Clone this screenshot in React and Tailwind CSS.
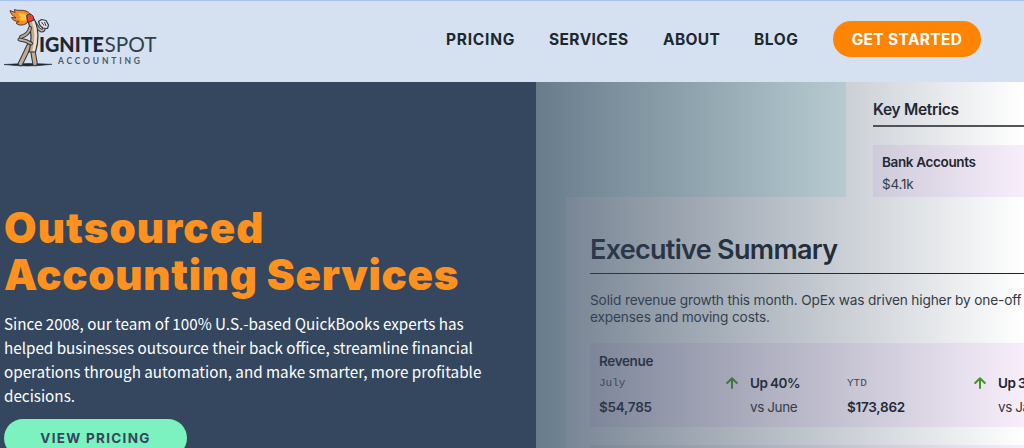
import React from 'react';

const NAV_LINKS = [
  { label: 'PRICING', width: 'w-[103px]', spacing: 'tracking-[0.75px]' },
  { label: 'SERVICES', width: 'w-[114px]', spacing: 'tracking-[0.4px]' },
  { label: 'ABOUT', width: 'w-[91px]', spacing: 'tracking-[0.35px]' },
  { label: 'BLOG', width: 'w-[78px]', spacing: 'tracking-[0.6px]' },
];

const Logo = () => (
  <svg width="160" height="70" viewBox="0 0 160 70" className="block shrink-0" aria-label="Ignite Spot Accounting">
    <path d="M4 63.500Q28 61.500 52 63.300Q28 66.500 4 63.500Z" fill="#1d2831" stroke="#1d2831" strokeWidth="0.600" />
    {/* flame */}
    <path d="M27 22C23 25 18 24.500 16 22L19 20.500C15 20.500 12.500 19 11.500 16.500L16 17C12.500 15 10.500 12 10 9.500L15 11.500L14.500 8.500C18 10.500 23 8 27 10.500C29 11.500 30 12.500 31 14Z" fill="#f58c20" stroke="#4e3f3c" strokeWidth="1" strokeLinejoin="round" />
    <path d="M26 19C23 21 20 19 19 17L21.500 17C19 15 19 13 18 12C21 12.500 24 12 27 14" fill="#ffc04a" />
    {/* right arm behind the body */}
    <path d="M33 20C37 24 37 28 41 29.500C44 30 45 27 43 24" fill="none" stroke="#303942" strokeWidth="3.800" strokeLinecap="round" />
    <path d="M33 20C37 24 37 28 41 29.500C44 30 45 27 43 24" fill="none" stroke="#cdbba6" strokeWidth="1.700" strokeLinecap="round" />
    {/* legs */}
    <path d="M29 45C26 51 24 56 20.500 62.500M33 48C33 54 34.500 58 35 62.500" fill="none" stroke="#303942" strokeWidth="5.500" strokeLinecap="round" />
    <path d="M29 45C26 51 24 56 20.500 62.500M33 48C33 54 34.500 58 35 62.500" fill="none" stroke="#c5aa90" strokeWidth="3.400" strokeLinecap="round" />
    {/* match stick body */}
    <path d="M28 20L34 18C39 27 39 40 35.500 51L29 51C32 40 31.500 29 28 20Z" fill="#c5a98c" stroke="#303942" strokeWidth="1.200" strokeLinejoin="round" />
    <path d="M33 20C36.500 29 36.500 40 33.500 50" fill="none" stroke="#eee2d2" strokeWidth="2.600" />
    {/* left arm bent to the hip */}
    <path d="M30 27C29 33 24 35 21 36M19.500 38.500C24 39 28 40.500 31 42.500" fill="none" stroke="#303942" strokeWidth="4" strokeLinecap="round" />
    <path d="M30 27C29 33 24 35 21 36M19.500 38.500C24 39 28 40.500 31 42.500" fill="none" stroke="#c5aa90" strokeWidth="2" strokeLinecap="round" />
    <path d="M26.500 14.500Q30 11.500 33 15L34 19L28 21.500Z" fill="#ee4034" stroke="#303942" strokeWidth="1" strokeLinejoin="round" />
    {/* glove */}
    <path d="M38.500 20.500L41.500 18.500L46 19.500L48.500 24L47.500 27.500L43 27L40 24.500Z" fill="#e3e8ed" stroke="#303942" strokeWidth="1.200" strokeLinejoin="round" />
    <path d="M41.500 21L44 24.500M44.500 21L46 25" stroke="#303942" strokeWidth="1" />
    <text x="39" y="51" textLength="65" lengthAdjust="spacingAndGlyphs" fontFamily="Lato, sans-serif" fontWeight="900" fontSize="20.500" fill="#1d2831">IGNITE</text>
    <text x="104.500" y="51" textLength="52" lengthAdjust="spacingAndGlyphs" fontFamily="Lato, sans-serif" fontWeight="400" fontSize="20.500" fill="#33404b">SPOT</text>
    <text x="58" y="63" textLength="82" fontFamily="Lato, sans-serif" fontWeight="700" fontSize="8.500" fill="#4c5a67">ACCOUNTING</text>
  </svg>
);

const UpArrow = () => (
  <svg width="12" height="12" viewBox="0 0 12 12" className="block" fill="none" stroke="#469b24" strokeWidth="2" strokeLinecap="round" strokeLinejoin="round">
    <path d="M6 11V1.500M1.200 6L6 1.200L10.800 6" />
  </svg>
);

const Header = () => (
  <header className="flex h-[82px] w-full items-start border-t border-[#a9c3f5] bg-[#d5e1f1]">
    <Logo />
    <nav className="ml-[286px] mt-[20px] flex h-9 items-center font-['Inter',sans-serif] text-[15.5px] font-bold text-[#1d2831]">
      {NAV_LINKS.map((link) => (
        <a key={link.label} className={`${link.width} ${link.spacing} whitespace-nowrap pt-px`}>{link.label}</a>
      ))}
      <a className="ml-px flex h-[36px] w-[148px] items-center justify-center whitespace-nowrap rounded-full bg-[#ff8403] pt-px tracking-[0.35px] text-white">
        GET STARTED
      </a>
    </nav>
  </header>
);

const Intro = () => (
  <div className="w-[536px] shrink-0 bg-[#34475e] pl-1 pt-[122px]">
    <h1 className="whitespace-nowrap font-['Inter',sans-serif] text-[42px] font-black leading-[47px] text-[#ff921e]">
      <span className="block tracking-[1.1px]">Outsourced</span>
      <span className="block tracking-[0.7px]">Accounting Services</span>
    </h1>
    <p className="mt-[13px] whitespace-nowrap font-['Noto_Sans_CJK_SC',sans-serif] text-[15.23px] leading-6 text-white">
      Since 2008, our team of 100% U.S.-based QuickBooks experts has<br />
      helped businesses outsource their back office, streamline financial<br />
      operations through automation, and make smarter, more profitable<br />
      decisions.
    </p>
    <a className="mt-[12px] flex h-[38px] w-[183px] items-center justify-center rounded-full bg-[#7bf2c0] font-['Inter',sans-serif] text-[13.5px] font-bold tracking-[1.3px] text-[#34475e]">
      VIEW PRICING
    </a>
  </div>
);

const KeyMetrics = () => (
  <div className="ml-[310px] h-[115px] bg-white pl-[27px] pt-[17px]">
    <h3 className="border-b-2 border-[#555] pb-[4px] text-[15.5px] font-semibold leading-[22px] tracking-[-0.3px]">Key Metrics</h3>
    <div className="mt-[18px] h-[53px] bg-[#f8eefb] pl-[9px] pt-[7px]">
      <div className="text-[13.5px] font-semibold leading-[20px] tracking-[-0.35px]">Bank Accounts</div>
      <div className="mt-[2px] text-[13.5px] leading-[20px] tracking-[-0.2px] text-[#333a42]">$4.1k</div>
    </div>
  </div>
);

const Report = () => (
  <div className="ml-[30px] h-[251px] bg-white pl-[24px] pt-[35px]">
    <h2 className="whitespace-nowrap border-b-[1.5px] border-[#222] pb-[6px] text-[27px] font-semibold leading-[35px] tracking-[-0.7px]">Executive Summary</h2>
    <p className="mt-[18px] whitespace-nowrap text-[13.7px] leading-[17px] tracking-[-0.16px] text-[#333a42]">
      Solid revenue growth this month. OpEx was driven higher by one-off<br />
      expenses and moving costs.
    </p>
    <div className="mt-[17px] h-[84px] bg-[#f8eefb] pl-[9px] pt-[8px]">
      <div className="text-[13.5px] font-semibold leading-[20px] tracking-[-0.35px]">Revenue</div>
      <div className="mt-px grid grid-cols-[127px_24px_97px_127px_24px_97px] items-center whitespace-nowrap text-[13.5px] leading-[22px] tracking-[-0.55px]">
        <span className="font-['Liberation_Mono',monospace] text-[11px] tracking-normal text-[#454b53]">July</span>
        <UpArrow />
        <span className="font-semibold">Up 40%</span>
        <span className="font-['Liberation_Mono',monospace] text-[11px] tracking-normal text-[#454b53]">YTD</span>
        <UpArrow />
        <span className="font-semibold">Up 32%</span>
      </div>
      <div className="mt-[2px] grid grid-cols-[151px_97px_151px_97px] whitespace-nowrap text-[13.5px] leading-[23px] tracking-[-0.25px]">
        <span className="font-semibold">$54,785</span>
        <span className="text-[#333a42] tracking-[-0.4px]">vs June</span>
        <span className="font-semibold">$173,862</span>
        <span className="text-[#333a42] tracking-[-0.4px]">vs January</span>
      </div>
    </div>
    <div className="mt-[18px] h-10 bg-[#f8eefb]" />
  </div>
);

const App = () => (
  <div className="h-[448px] w-[1024px] overflow-hidden">
    <Header />
    <main className="flex h-[366px]">
      <Intro />
      <div className="relative min-w-0 flex-1 overflow-hidden bg-[#e3f8f8] font-['Inter',sans-serif] text-[#1c222c]">
        <KeyMetrics />
        <Report />
        {/* fades the report into the copy on the left */}
        <div className="absolute inset-0 bg-linear-to-r from-[rgba(52,71,94,0.7)] to-[rgba(52,71,94,0)]" />
      </div>
    </main>
  </div>
);

export default App;
